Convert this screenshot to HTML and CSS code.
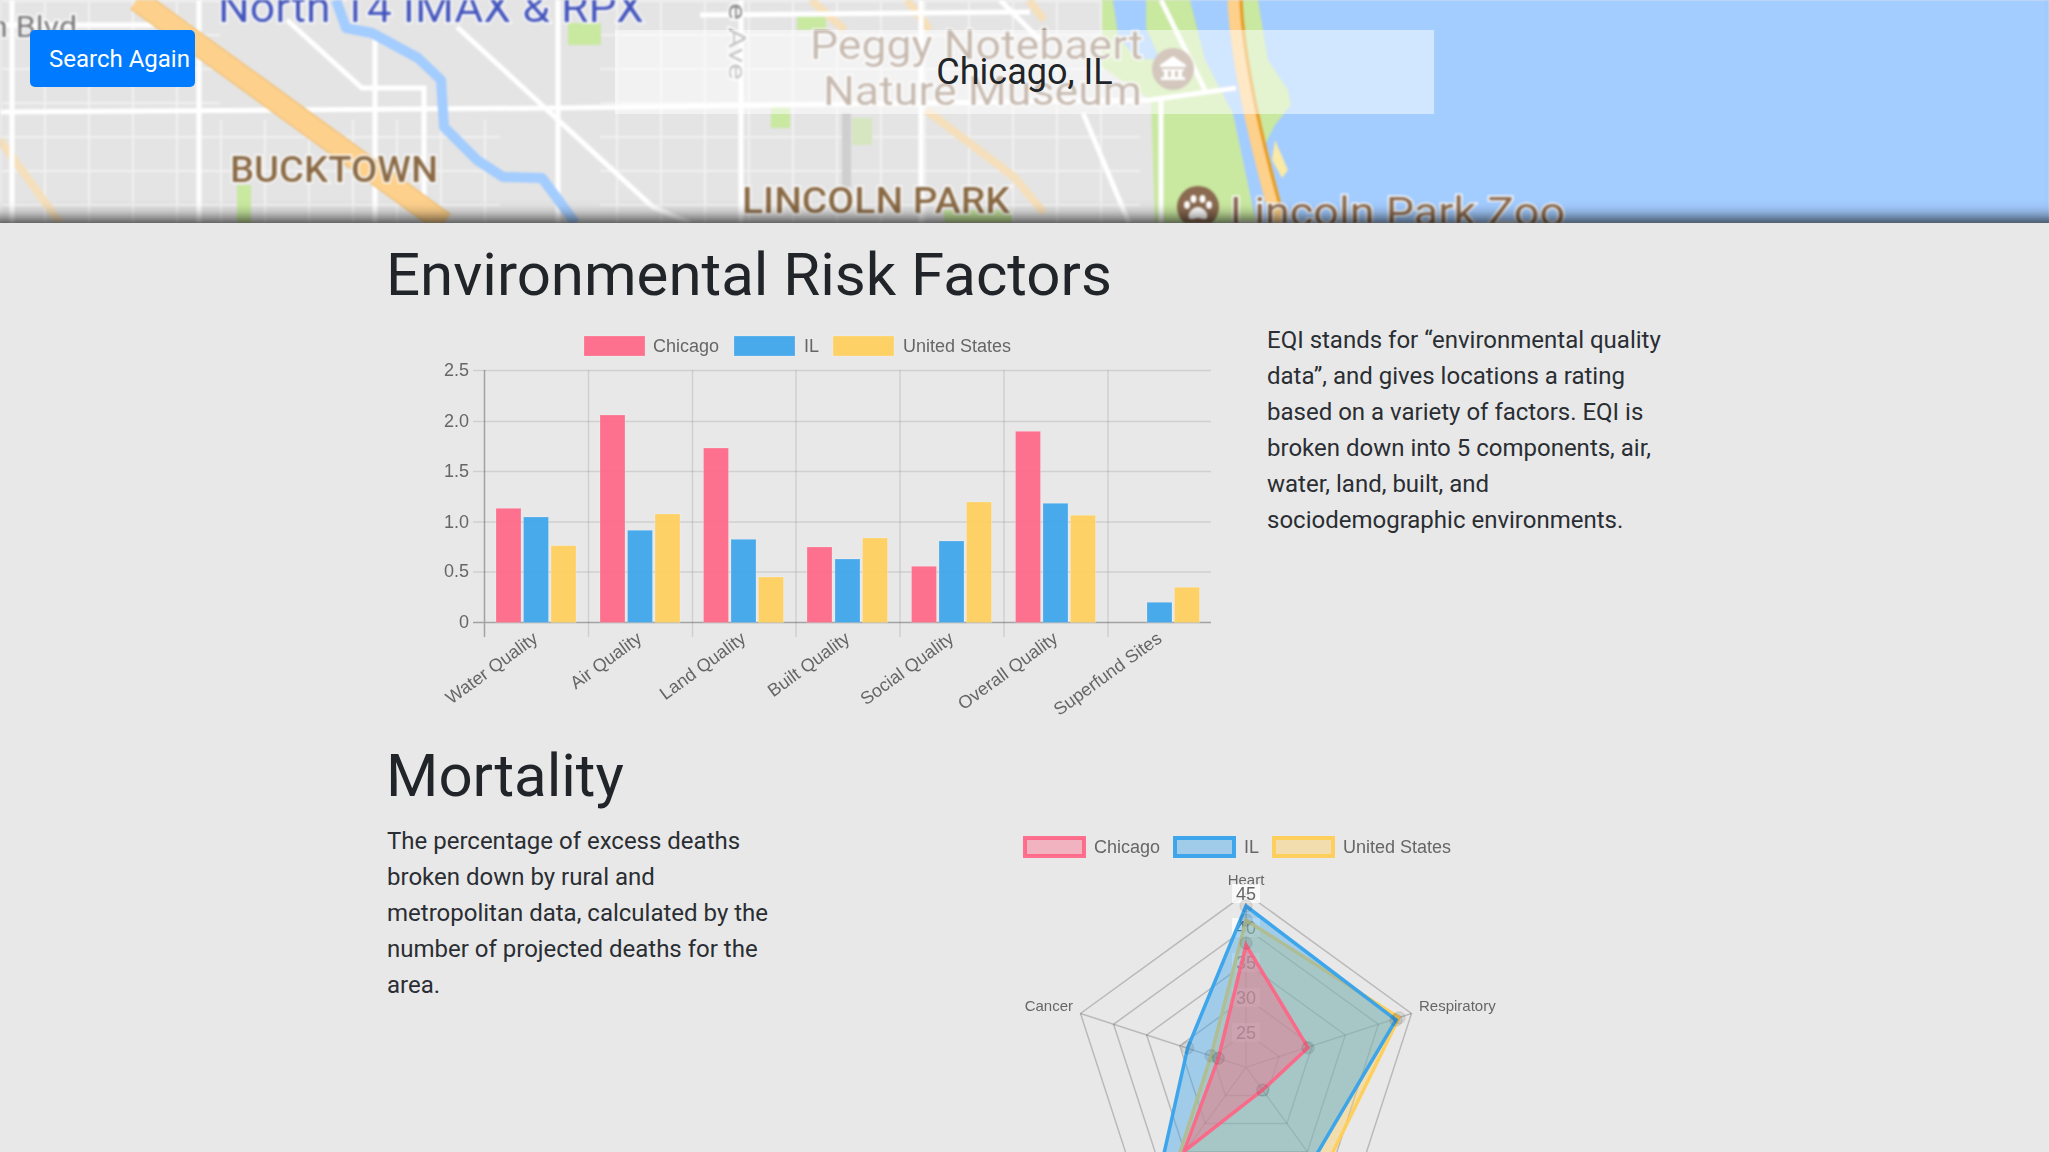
FILE: index.html
```html
<!DOCTYPE html>
<html>

<head>
    <meta http-equiv="Content-Type" content="text/html; charset=utf-8" />
    <title>Chicago, IL</title>
    <link rel="stylesheet" href="styles.css">
</head>

<body>
    <header class="hero">
        <svg class="map" viewBox="0 0 2049 223" preserveAspectRatio="none">
            <defs>
                <pattern id="blocks" width="44" height="34" patternUnits="userSpaceOnUse">
                    <path d="M1 0V34M0 1H44" class="map-minor" />
                </pattern>
            </defs>
            <rect class="map-land" x="0" y="0" width="2049" height="223" />
            <rect fill="url(#blocks)" x="0" y="0" width="220" height="223" />
            <rect fill="url(#blocks)" x="600" y="0" width="540" height="223" />
            <rect fill="url(#blocks)" x="200" y="120" width="300" height="103" />

            <!-- parks -->
            <rect class="map-park" x="568" y="23" width="33" height="22" />
            <rect class="map-park" x="797" y="17" width="29" height="13" />
            <rect class="map-park" x="771" y="107" width="19" height="21" />
            <rect class="map-park-pale" x="852" y="118" width="20" height="27" />
            <rect class="map-park" x="237" y="185" width="14" height="38" />
            <rect class="map-park" x="944" y="210" width="68" height="13" />
            <rect class="map-rail" x="842" y="113" width="9" height="74" />

            <!-- lake and lakefront -->
            <polygon class="map-water" points="1186,0 2049,0 2049,223 1256,223 1233,114 1205,60" />
            <polygon class="map-park" points="1102,0 1190,0 1205,60 1233,114 1256,223 1155,223 1151,100 1102,67" />
            <polygon class="map-water" points="1113,0 1146,0 1146,28 1160,60 1135,58 1118,35" />
            <polygon class="map-park" points="1243,0 1258,0 1268,60 1288,90 1291,105 1275,125 1262,150 1240,90" />
            <polygon class="map-beach" points="1275,140 1288,170 1282,178 1272,160" />

            <!-- peach arterials -->
            <path class="map-arterial" d="M811,0L845,30M907,0L930,30M1029,0L1044,20M926,110L1014,177L1044,213M0,140L60,223" />

            <!-- main streets -->
            <path class="map-street" d="M0,25H190M0,112L560,108L1150,100L1236,88M700,15L1030,12" />
            <path class="map-street" d="M12,0V223M199,0V223M375,30V223M558,0V223M741,0V223M921,0V223M1161,100V223" />
            <path class="map-street" d="M287,20L362,88H424V223M457,27L653,207L690,223M1083,113L1129,223M1161,0L1205,90M1000,0L1040,40" />
            <path class="map-river" d="M336,0L346,28L372,33L418,58L441,80L444,127L477,160L503,177L542,178L568,213L575,223" />

            <!-- expressways -->
            <path class="map-highway-edge" d="M137,0L444,223" />
            <path class="map-highway" d="M137,0L444,223" />
            <path class="map-lakeshore" d="M1235,0C1237,50 1250,120 1279,223" />
            <path class="map-lakeshore-line" d="M1241,0C1243,50 1256,120 1285,223" />

            <!-- labels -->
            <text class="map-text-cinema" x="218" y="22" textLength="426" lengthAdjust="spacingAndGlyphs">North 14 IMAX &amp; RPX</text>
            <text class="map-text-road" x="-10" y="37" textLength="87" lengthAdjust="spacingAndGlyphs">n Blvd</text>
            <text class="map-text-ave" transform="translate(729,3) rotate(90)" textLength="77" lengthAdjust="spacingAndGlyphs">e Ave</text>
            <text class="map-text-poi" x="810" y="59" textLength="333" lengthAdjust="spacingAndGlyphs">Peggy Notebaert</text>
            <text class="map-text-poi" x="823" y="105" textLength="319" lengthAdjust="spacingAndGlyphs">Nature Museum</text>
            <text class="map-text-area" x="230" y="182" textLength="208" lengthAdjust="spacingAndGlyphs">BUCKTOWN</text>
            <text class="map-text-area" x="742" y="213" textLength="268" lengthAdjust="spacingAndGlyphs">LINCOLN PARK</text>
            <text class="map-text-zoo" x="1230" y="226" textLength="335" lengthAdjust="spacingAndGlyphs">Lincoln Park Zoo</text>

            <!-- museum pin -->
            <circle class="map-pin-museum" cx="1173" cy="69" r="21" />
            <path class="map-pin-glyph" d="M1173,56L1186,65V67H1160V65ZM1162,69H1184V71H1182V77H1185V80H1161V77H1164V71H1162ZM1168,71V77H1171V71ZM1175,71V77H1178V71Z" />
            <!-- zoo pin -->
            <circle class="map-pin-zoo" cx="1198" cy="207" r="21" />
            <path class="map-pin-glyph" d="M1198,207C1204,207 1209,214 1207,218C1205,221 1201,218 1198,218C1195,218 1191,221 1189,218C1187,214 1192,207 1198,207Z" />
            <ellipse class="map-pin-glyph" cx="1187" cy="205" rx="3" ry="4" />
            <ellipse class="map-pin-glyph" cx="1193.500" cy="199" rx="3" ry="4" />
            <ellipse class="map-pin-glyph" cx="1202.500" cy="199" rx="3" ry="4" />
            <ellipse class="map-pin-glyph" cx="1209" cy="205" rx="3" ry="4" />
        </svg>

        <div class="hero-left"><button class="search-btn">Search Again</button></div>
        <div class="hero-title">Chicago, IL</div>
    </header>

    <main class="content">
        <h1 class="section-title">Environmental Risk Factors</h1>
        <section class="row row-risk">
            <svg class="chart" width="880" height="420" viewBox="387 322 880 420">
                <!-- legend -->
                <rect class="bar-chi" x="584" y="336" width="61" height="20" />
                <text class="chart-text" x="653" y="352">Chicago</text>
                <rect class="bar-il" x="734" y="336" width="61" height="20" />
                <text class="chart-text" x="804" y="352">IL</text>
                <rect class="bar-us" x="833" y="336" width="61" height="20" />
                <text class="chart-text" x="903" y="352">United States</text>

                <!-- grid -->
                <path class="grid" d="M473,370.500H1211M473,421.500H1211M473,471.500H1211M473,522H1211M473,572H1211" />
                <path class="grid" d="M588.500,370V637M692.500,370V637M796,370V637M900,370V637M1004,370V637M1108,370V637" />
                <path class="grid-zero" d="M473,622.500H1211M484.500,370V637" />

                <text class="chart-text tick" x="469" y="376">2.5</text>
                <text class="chart-text tick" x="469" y="427">2.0</text>
                <text class="chart-text tick" x="469" y="477">1.5</text>
                <text class="chart-text tick" x="469" y="527.500">1.0</text>
                <text class="chart-text tick" x="469" y="577">0.5</text>
                <text class="chart-text tick" x="469" y="628">0</text>

                <!-- water -->
                <rect class="bar-chi" x="496" y="508.300" width="25" height="114.200" />
                <rect class="bar-il" x="523.500" y="517" width="25" height="105.500" />
                <rect class="bar-us" x="551" y="545.700" width="25" height="76.800" />
                <!-- air -->
                <rect class="bar-chi" x="600" y="415" width="25" height="207.500" />
                <rect class="bar-il" x="627.500" y="530.300" width="25" height="92.200" />
                <rect class="bar-us" x="655" y="514" width="25" height="108.500" />
                <!-- land -->
                <rect class="bar-chi" x="703.500" y="448" width="25" height="174.500" />
                <rect class="bar-il" x="731" y="539.300" width="25" height="83.200" />
                <rect class="bar-us" x="758.500" y="577" width="25" height="45.500" />
                <!-- built -->
                <rect class="bar-chi" x="807" y="547" width="25" height="75.500" />
                <rect class="bar-il" x="835" y="559" width="25" height="63.500" />
                <rect class="bar-us" x="862.500" y="538" width="25" height="84.500" />
                <!-- social -->
                <rect class="bar-chi" x="911.500" y="566.300" width="25" height="56.200" />
                <rect class="bar-il" x="939" y="541" width="25" height="81.500" />
                <rect class="bar-us" x="966.500" y="502" width="25" height="120.500" />
                <!-- overall -->
                <rect class="bar-chi" x="1015.500" y="431.300" width="25" height="191.200" />
                <rect class="bar-il" x="1043" y="503.300" width="25" height="119.200" />
                <rect class="bar-us" x="1070.500" y="515.300" width="25" height="107.200" />
                <!-- superfund -->
                <rect class="bar-il" x="1147" y="602.300" width="25" height="20.200" />
                <rect class="bar-us" x="1174.500" y="587.300" width="25" height="35.200" />

                <text class="chart-text cat" transform="translate(539,641) rotate(-36)">Water Quality</text>
                <text class="chart-text cat" transform="translate(643,641) rotate(-36)">Air Quality</text>
                <text class="chart-text cat" transform="translate(747,641) rotate(-36)">Land Quality</text>
                <text class="chart-text cat" transform="translate(851,641) rotate(-36)">Built Quality</text>
                <text class="chart-text cat" transform="translate(955,641) rotate(-36)">Social Quality</text>
                <text class="chart-text cat" transform="translate(1059,641) rotate(-36)">Overall Quality</text>
                <text class="chart-text cat" transform="translate(1163,641) rotate(-36)">Superfund Sites</text>
            </svg>
            <p class="blurb blurb-risk">EQI stands for “environmental quality data”, and gives locations a rating based on a variety of factors. EQI is broken down into 5 components, air, water, land, built, and sociodemographic environments.</p>
        </section>

        <h1 class="section-title">Mortality</h1>
        <section class="row row-mortality">
            <p class="blurb blurb-mortality">The percentage of excess deaths broken down by rural and metropolitan data, calculated by the number of projected deaths for the area.</p>
            <svg class="chart" width="700" height="340" viewBox="807 823 700 340">
                <!-- legend -->
                <rect class="swatch swatch-chi" x="1025" y="838" width="59" height="18" />
                <text class="chart-text" x="1094" y="853">Chicago</text>
                <rect class="swatch swatch-il" x="1175" y="838" width="59" height="18" />
                <text class="chart-text" x="1244" y="853">IL</text>
                <rect class="swatch swatch-us" x="1274" y="838" width="59" height="18" />
                <text class="chart-text" x="1343" y="853">United States</text>

                <!-- rings -->
                <polygon class="ring" points="1246,1032.500 1279.100,1056.500 1266.500,1095.500 1225.500,1095.500 1212.900,1056.500" />
                <polygon class="ring" points="1246,997.700 1312.200,1045.800 1286.900,1123.600 1205.100,1123.600 1179.800,1045.800" />
                <polygon class="ring" points="1246,962.900 1345.300,1035 1307.400,1151.800 1184.600,1151.800 1146.700,1035" />
                <polygon class="ring" points="1246,928.100 1378.400,1024.300 1327.800,1180 1164.200,1180 1113.600,1024.300" />
                <polygon class="ring" points="1246,893.300 1411.500,1013.500 1348.300,1208.100 1143.700,1208.100 1080.500,1013.500" />
                <path class="ring" d="M1246,1067.300V893.300M1246,1067.300L1411.500,1013.500M1246,1067.300L1348.300,1208.100M1246,1067.300L1143.700,1208.100M1246,1067.300L1080.500,1013.500" />

                <text class="chart-text chart-small mid" x="1246" y="885">Heart</text>
                <text class="chart-text chart-small" x="1419" y="1011">Respiratory</text>
                <text class="chart-text chart-small tick" x="1073" y="1011">Cancer</text>

                <!-- value labels -->
                <rect class="tick-back" x="1232" y="884" width="28" height="19" />
                <rect class="tick-back" x="1232" y="918" width="28" height="19" />
                <rect class="tick-back" x="1232" y="953" width="28" height="19" />
                <rect class="tick-back" x="1232" y="988" width="28" height="19" />
                <rect class="tick-back" x="1232" y="1023" width="28" height="19" />
                <text class="chart-text mid" x="1246" y="899.500">45</text>
                <text class="chart-text mid" x="1246" y="933.500">40</text>
                <text class="chart-text mid" x="1246" y="968.500">35</text>
                <text class="chart-text mid" x="1246" y="1003.500">30</text>
                <text class="chart-text mid" x="1246" y="1038.500">25</text>

                <!-- datasets, last one first -->
                <polygon class="swatch line swatch-us" points="1246,920 1399,1017.700 1322.700,1172.900 1176.600,1162.800 1211,1055.700" />
                <polygon class="swatch line swatch-il" points="1246,906 1396,1020 1313.300,1160 1155.400,1191.900 1187.700,1047.700" />
                <polygon class="swatch line swatch-chi" points="1246,945 1308,1047.700 1262.700,1090 1184,1151.500 1218.300,1058.300" />

                <circle class="dot" cx="1246" cy="920" r="6" />
                <circle class="dot" cx="1399" cy="1017.700" r="6" />
                <circle class="dot" cx="1211" cy="1055.700" r="6" />
                <circle class="dot" cx="1246" cy="906" r="6" />
                <circle class="dot" cx="1396" cy="1020" r="6" />
                <circle class="dot" cx="1187.700" cy="1047.700" r="6" />
                <circle class="dot" cx="1246" cy="943" r="6" />
                <circle class="dot" cx="1308" cy="1047.700" r="6" />
                <circle class="dot" cx="1262.700" cy="1090" r="6" />
                <circle class="dot" cx="1218.300" cy="1058.300" r="6" />
            </svg>
        </section>
    </main>
</body>

</html>
```

FILE: styles.css
```css
html,
body {
    overflow: hidden;
    width: 100%;
    height: 100%;
    margin: 0;
    padding: 0;
}

body {
    background-color: #e8e8e8;
    color: #212529;
    font-family: Roboto, "Liberation Sans", sans-serif;
}

/* top banner */
.hero {
    position: relative;
    overflow: hidden;
    height: 223px;
    padding-top: 30px;
    box-sizing: border-box;
    display: grid;
    grid-template-columns: 1fr 40% 1fr;
    align-items: start;
}

.hero::after {
    content: "";
    position: absolute;
    top: 0;
    right: 0;
    bottom: 0;
    left: 0;
    box-shadow: inset 0 -18px 16px -14px rgba(0, 0, 0, 0.8);
}

.map {
    position: absolute;
    top: 0;
    left: 0;
    width: 2049px;
    height: 223px;
    filter: blur(0.9px);
}

.hero-left {
    position: relative;
    padding-left: 30px;
}

.search-btn {
    display: block;
    width: 165px;
    height: 57px;
    padding: 0 0 0 19px;
    border: 0;
    border-radius: 5px;
    background-color: #007bff;
    color: #fff;
    font-family: Roboto, sans-serif;
    font-size: 24px;
    text-align: left;
    white-space: nowrap;
}

.hero-title {
    position: relative;
    height: 84px;
    line-height: 84px;
    background-color: rgba(255, 255, 255, 0.5);
    font-size: 36px;
    text-align: center;
}

/* map paint */
.map-land { fill: #e4e4e4; }
.map-minor { fill: none; stroke: #f1f1f1; stroke-width: 2; }
.map-park { fill: #c9e8a0; }
.map-park-pale { fill: #d5e6c0; }
.map-rail { fill: #cfcfcf; }
.map-water { fill: #a3ccff; }
.map-beach { fill: #fbeaa5; }
.map-arterial { fill: none; stroke: #f6dfbb; stroke-width: 8; }
.map-street { fill: none; stroke: #fff; stroke-width: 5; }
.map-river { fill: none; stroke: #a3ccff; stroke-width: 10; stroke-linejoin: round; }
.map-highway-edge { fill: none; stroke: #f0c27c; stroke-width: 23; }
.map-highway { fill: none; stroke: #fdd08c; stroke-width: 20; }
.map-lakeshore { fill: none; stroke: #fdd08c; stroke-width: 15; }
.map-lakeshore-line { fill: none; stroke: #e59a1e; stroke-width: 3; }

.map text {
    font-family: Roboto, sans-serif;
    paint-order: stroke;
    stroke: #fff;
    stroke-width: 3px;
}

.map-text-cinema { fill: #4455bb; font-size: 42px; }
.map-text-road { fill: #777; font-size: 30px; }
.map-text-ave { fill: #8a8a8a; font-size: 24px; }
.map-text-poi { fill: #8d7460; font-size: 41px; }
.map-text-area { fill: #8a6a45; font-size: 36px; font-weight: 500; }
.map-text-zoo { fill: #8a6a50; font-size: 41px; }
.map-pin-museum { fill: #a98f7c; }
.map-pin-zoo { fill: #8a6a50; }
.map-pin-glyph { fill: #fff; }

/* page body */
.content {
    padding: 18px 0 0 387px;
}

.section-title {
    margin: 0 0 14px -1px;
    font-size: 60px;
    font-weight: 400;
    line-height: 67px;
}

.row {
    display: grid;
}

.row-risk {
    grid-template-columns: 880px 410px;
}

.row-mortality {
    grid-template-columns: 420px 700px;
}

.blurb {
    margin: 0;
    font-size: 24px;
    font-weight: 400;
    line-height: 36px;
    color: #2a2e33;
}

.blurb-mortality {
    width: 400px;
}

.chart {
    display: block;
    filter: blur(0.5px);
}

/* chart paint */
.chart-text {
    fill: #666;
    font-family: "Liberation Sans", Arial, sans-serif;
    font-size: 18px;
}

.chart-small { font-size: 15px; }
.tick { text-anchor: end; }
.cat { text-anchor: end; font-size: 18px; }
.mid { text-anchor: middle; }
.grid { fill: none; stroke: rgba(0, 0, 0, 0.1); stroke-width: 1.5; }
.grid-zero { fill: none; stroke: rgba(0, 0, 0, 0.3); stroke-width: 1.5; }
.bar-chi { fill: rgba(255, 99, 132, 0.9); stroke: rgba(255, 255, 255, 0.2); }
.bar-il { fill: rgba(54, 162, 235, 0.9); stroke: rgba(255, 255, 255, 0.2); }
.bar-us { fill: rgba(255, 206, 86, 0.9); stroke: rgba(255, 255, 255, 0.2); }
.swatch { stroke-width: 4; }
.swatch.line { stroke-width: 3.500; }
.swatch-chi { fill: rgba(255, 99, 132, 0.4); stroke: rgba(255, 99, 132, 0.9); }
.swatch-il { fill: rgba(54, 162, 235, 0.4); stroke: rgba(54, 162, 235, 0.95); }
.swatch-us { fill: rgba(255, 206, 86, 0.4); stroke: rgba(255, 206, 86, 0.95); }
.ring { fill: none; stroke: rgba(0, 0, 0, 0.2); stroke-width: 1.5; }
.tick-back { fill: rgba(255, 255, 255, 0.75); }
.dot { fill: rgba(0, 0, 0, 0.08); stroke: rgba(0, 0, 0, 0.08); stroke-width: 1.5; }
```
